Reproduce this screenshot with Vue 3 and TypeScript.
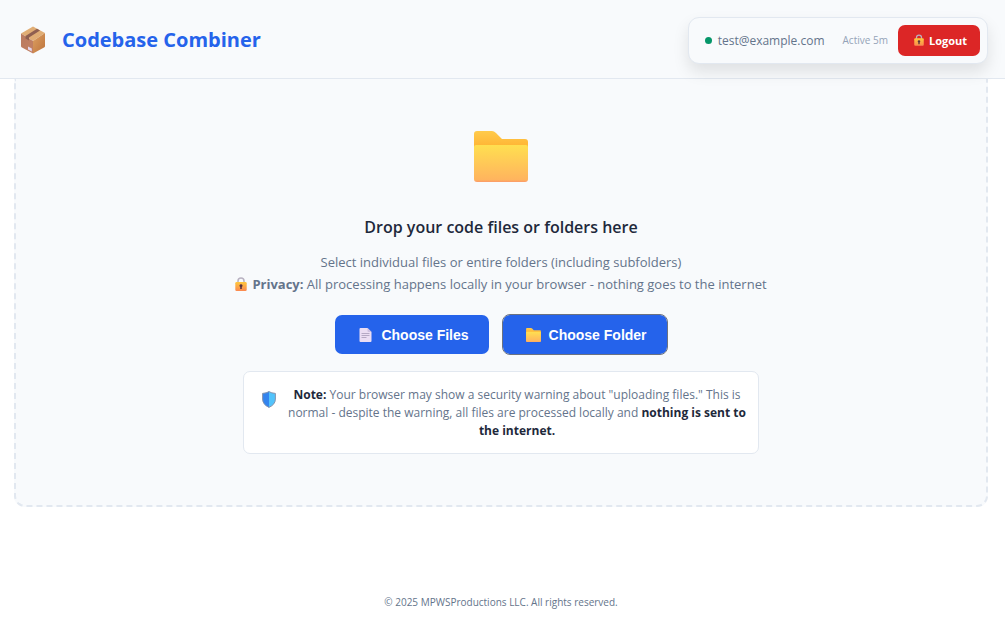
<script setup lang="ts">
const account = { email: 'test@example.com', activity: 'Active 5m' }
</script>

<template>
  <svg class="defs" aria-hidden="true">
    <defs>
      <linearGradient id="folder-back" x1="0" y1="0" x2="0" y2="1">
        <stop offset="0" stop-color="#ffcb4c" />
        <stop offset="0.3" stop-color="#ffb636" />
      </linearGradient>
      <linearGradient id="folder-front" x1="0" y1="0" x2="0" y2="1">
        <stop offset="0" stop-color="#ffdf50" />
        <stop offset="0.94" stop-color="#ffb45e" />
        <stop offset="1" stop-color="#fb9a6a" />
      </linearGradient>
      <linearGradient id="lock-body" x1="0" y1="0" x2="0" y2="1">
        <stop offset="0" stop-color="#ffc83d" />
        <stop offset="1" stop-color="#fb8850" />
      </linearGradient>
      <linearGradient id="box-left" x1="0" y1="0" x2="1" y2="1">
        <stop offset="0" stop-color="#b97a60" />
        <stop offset="1" stop-color="#c38164" />
      </linearGradient>
      <linearGradient id="box-right" x1="0" y1="0" x2="1" y2="1">
        <stop offset="0" stop-color="#dda062" />
        <stop offset="1" stop-color="#bd733c" />
      </linearGradient>
      <symbol id="folder" viewBox="0 0 54 51">
        <path d="M3 0H18Q20 0 22 2L28 8H51Q54 8 54 11V48H0V3Q0 0 3 0Z" fill="url(#folder-back)" />
        <path d="M0 16Q0 14 2 14H52Q54 14 54 16V48Q54 51 51 51H3Q0 51 0 48Z" fill="url(#folder-front)" />
      </symbol>
      <symbol id="lock" viewBox="0 0 12 14">
        <path d="M3 6V4Q3 1 6 1T9 4V6" fill="none" stroke="#b8b1c1" stroke-width="1.5" />
        <rect x="0.3" y="5" width="11.4" height="9" rx="1.2" fill="url(#lock-body)" />
        <path d="M6 7.2A1.5 1.5 0 0 1 6.8 10V12H5.2V10A1.5 1.5 0 0 1 6 7.2Z" fill="#59333f" />
      </symbol>
    </defs>
  </svg>

  <header class="topbar">
    <div class="brand">
      <svg class="brand-icon" viewBox="0 0 26 28" aria-hidden="true">
        <path d="M13 0.5L25 7L13 15L1 7.5Z" fill="#e0ad75" />
        <path d="M1 7.5L13 15V27.5L2 21.5Q1 21 1 20Z" fill="url(#box-left)" />
        <path d="M25 7L13 15V27.5L24 21.5Q25 21 25 20Z" fill="url(#box-right)" />
        <path d="M5.5 10L17 2.8L20 4.4L9 11.6V14.6L5.5 12.5Z" fill="#8f5f50" />
        <path d="M8 20.5L11.8 22.6V25.6L8 23.5Z" fill="#e4d7ed" />
      </svg>
      <h1>Codebase Combiner</h1>
    </div>
    <div class="account">
      <span class="dot"></span>
      <span class="email">{{ account.email }}</span>
      <span class="activity">{{ account.activity }}</span>
      <button type="button" class="logout">
        <svg class="logout-icon" aria-hidden="true"><use href="#lock" /></svg>
        Logout
      </button>
    </div>
  </header>

  <main>
    <section class="dropzone">
      <svg class="hero" aria-hidden="true"><use href="#folder" /></svg>
      <h2>Drop your code files or folders here</h2>
      <p class="lead">
        Select individual files or entire folders (including subfolders)<br />
        <svg class="privacy-icon" aria-hidden="true"><use href="#lock" /></svg>
        <strong>Privacy:</strong> All processing happens locally in your browser - nothing goes to the internet
      </p>
      <div class="actions">
        <button type="button" class="choose">
          <svg class="choose-icon" viewBox="0 0 12 14" aria-hidden="true">
            <path d="M1 0H8L12 4V13Q12 14 11 14H1Q0 14 0 13V1Q0 0 1 0Z" fill="#ebddf3" />
            <path d="M8 0L12 4H9Q8 4 8 3Z" fill="#cdbfe0" />
            <path d="M2 5.5H10M2 7.5H10M2 9.5H7" stroke="#b5a8c4" />
          </svg>
          Choose Files
        </button>
        <button type="button" class="choose focused">
          <svg class="choose-icon" aria-hidden="true"><use href="#folder" /></svg>
          Choose Folder
        </button>
      </div>
      <div class="note">
        <svg class="shield" viewBox="0 0 14 17" aria-hidden="true">
          <path d="M7 0.6Q9.5 2.2 13.4 2.4V8Q13.4 13.5 7 16.4Q0.6 13.5 0.6 8V2.4Q4.5 2.2 7 0.6Z" fill="#52c3fb" />
          <path d="M7 0.6V16.4Q0.6 13.5 0.6 8V2.4Q4.5 2.2 7 0.6Z" fill="#3384ee" />
          <path d="M7 0.6Q9.5 2.2 13.4 2.4V8Q13.4 13.5 7 16.4Q0.6 13.5 0.6 8V2.4Q4.5 2.2 7 0.6Z" fill="none" stroke="#8793ad" />
        </svg>
        <p>
          <strong>Note:</strong> Your browser may show a security warning about "uploading files." This is<br />
          normal - despite the warning, all files are processed locally and
          <strong>nothing is sent to<br />the internet.</strong>
        </p>
      </div>
    </section>
  </main>

  <footer>© 2025 MPWSProductions LLC. All rights reserved.</footer>
</template>

<style>
body {
  margin: 0;
  background: #fff;
  font-family: "Segoe UI", "Open Sans", "Noto Sans", sans-serif;
}
</style>

<style scoped>
.defs {
  position: absolute;
  width: 0;
  height: 0;
}
h1,
h2,
p {
  margin: 0;
}
button {
  border: 0;
  color: #fff;
  font-weight: 700;
  cursor: pointer;
  display: flex;
  align-items: center;
}
.topbar {
  display: flex;
  justify-content: space-between;
  align-items: center;
  box-sizing: border-box;
  min-height: 79px;
  padding: 16px 17px 14px 20px;
  background: #f8fafc;
  border-bottom: 1px solid #e2e8f0;
}
.brand {
  display: flex;
  align-items: center;
  gap: 16px;
}
.brand-icon {
  width: 26px;
  height: 28px;
}
h1 {
  font-size: 20px;
  line-height: 28px;
  font-weight: 700;
  color: #2563eb;
}
.account {
  display: flex;
  align-items: center;
  padding: 7px 7px 7px 16px;
  border: 1px solid #e2e8f0;
  border-radius: 11px;
  background: #f8fafc;
  box-shadow: 0 8px 16px rgba(0, 0, 0, 0.1);
}
.dot {
  width: 7px;
  height: 7px;
  border-radius: 50%;
  background: #059669;
  margin-right: 6px;
}
.email {
  font-size: 12px;
  color: #64748b;
  margin-right: 18px;
}
.activity {
  font-size: 10px;
  color: #94a3b8;
  margin-right: 10px;
}
.logout {
  height: 31px;
  padding: 0 13px 0 16px;
  gap: 5px;
  border-radius: 7px;
  background: #dc2626;
  font-family: inherit;
  font-size: 11px;
}
.logout-icon {
  width: 10px;
  height: 12px;
}
.dropzone {
  display: flex;
  flex-direction: column;
  align-items: center;
  margin: 0 17px 0 14px;
  padding: 52px 42px 51px;
  border: 2px dashed #e2e8f0;
  border-top: 0;
  border-radius: 0 0 11px 11px;
  background: #f8fafc;
  text-align: center;
}
.hero {
  width: 54px;
  height: 51px;
}
h2 {
  margin-top: 32px;
  font-size: 16px;
  line-height: 26px;
  font-weight: 600;
  color: #1e293b;
}
.lead {
  margin-top: 11px;
  font-size: 13px;
  line-height: 22px;
  color: #64748b;
}
.privacy-icon {
  width: 12px;
  height: 14px;
  margin-right: 5px;
  vertical-align: -2px;
}
.actions {
  display: flex;
  gap: 14px;
  margin-top: 20px;
}
.choose {
  height: 39px;
  padding: 0 20px 0 23px;
  gap: 8px;
  border-radius: 7px;
  background: #2563eb;
  font-family: "Liberation Sans", Arial, sans-serif;
  font-size: 14px;
}
.focused {
  outline: 1px solid #6b7280;
}
.choose-icon {
  width: 15px;
  height: 14px;
}
.note {
  display: flex;
  align-items: flex-start;
  box-sizing: border-box;
  width: 100%;
  max-width: 516px;
  margin-top: 17px;
  padding: 14px 10px 13px 18px;
  gap: 10px;
  border: 1px solid #e2e8f0;
  border-radius: 7px;
  background: #fff;
}
.note p {
  flex: 1;
  font-size: 12px;
  line-height: 18px;
  color: #64748b;
}
.note strong {
  color: #1e293b;
}
.shield {
  flex: none;
  width: 14px;
  height: 17px;
  margin-top: 5px;
}
footer {
  margin: 86px 3px 0 0;
  font-size: 10px;
  line-height: 18px;
  text-align: center;
  color: #64748b;
}
</style>
